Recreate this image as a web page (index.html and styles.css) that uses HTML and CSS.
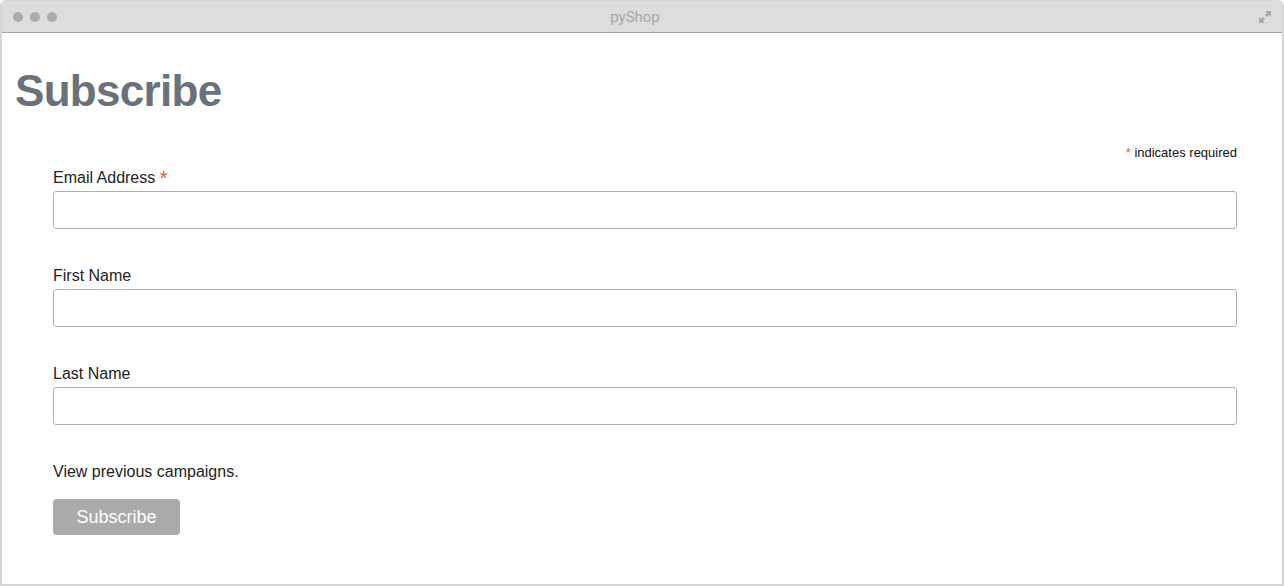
FILE: index.html
```html
<!DOCTYPE html>
<html>
<head>
<meta charset="utf-8">
<link rel="stylesheet" href="styles.css">
</head>
<body>
<div class="window">
  <div class="titlebar">
    <div class="dots"><span class="dot"></span><span class="dot"></span><span class="dot"></span></div>
    <div class="title">pyShop</div>
    <svg class="expand" width="14" height="14" viewBox="0 0 14 14">
      <path d="M7 1 H13 V7 L11 5 L9 7 L7 5 L9 3 Z" fill="#a9a9a9"/>
      <path d="M1 7 L3 9 L5 7 L7 9 L5 11 L7 13 H1 Z" fill="#a9a9a9"/>
    </svg>
  </div>
  <div class="content">
    <h1 class="heading">Subscribe</h1>
    <form class="form">
      <div class="required-note"><span class="ast">*</span> indicates required</div>
      <div class="field">
        <label class="label">Email Address <span class="ast ast-lg">*</span></label>
        <input class="input" type="email">
      </div>
      <div class="field">
        <label class="label">First Name</label>
        <input class="input" type="text">
      </div>
      <div class="field">
        <label class="label">Last Name</label>
        <input class="input" type="text">
      </div>
      <div class="campaigns">View previous campaigns.</div>
      <button class="btn" type="button">Subscribe</button>
    </form>
  </div>
</div>
</body>
</html>
```

FILE: styles.css
```css
* { box-sizing: border-box; }
html, body { margin: 0; padding: 0; background: #fff; }
body { font-family: "Liberation Sans", Arial, sans-serif; }

.window {
  width: 1284px;
  height: 586px;
  border: 2px solid #d6d6d6;
  border-top-width: 1px;
  border-radius: 6px 6px 0 0;
  display: flex;
  flex-direction: column;
  overflow: hidden;
}

.titlebar {
  height: 32px;
  flex: none;
  background: #dddddd;
  border-bottom: 1px solid #a3a3a3;
  display: flex;
  align-items: center;
  position: relative;
  padding: 0 10px 0 11px;
}

.dots { display: flex; gap: 7px; }
.dot { width: 10px; height: 10px; border-radius: 50%; background: #ababab; display: block; }

.title {
  position: absolute;
  left: 0; right: 14px; top: 0;
  text-align: center;
  line-height: 32px;
  font-family: Roboto, "Liberation Sans", sans-serif;
  font-size: 15px;
  color: #a8a8a8;
}

.expand { margin-left: auto; margin-top: 1px; }

.content { flex: 1; padding: 0 45px 0 0; }

.heading {
  margin: 0;
  padding: 32px 0 0 13px;
  font-family: "Liberation Sans", Arial, sans-serif;
  font-weight: 700;
  font-size: 44px;
  line-height: 52px;
  color: #69727b;
  letter-spacing: -0.7px;
}

.form { padding-left: 51px; }

.required-note {
  text-align: right;
  font-size: 13px;
  line-height: 15px;
  color: #111;
  margin-top: 28px;
  margin-bottom: 8px;
}

.ast { color: #e85c41; }
.ast-lg { font-size: 20px; line-height: 16px; vertical-align: -2px; }

.field { display: flex; flex-direction: column; gap: 4px; margin-bottom: 37px; }

.label { font-size: 16px; line-height: 19px; color: #222; }

.input {
  height: 38px;
  width: 100%;
  border: 1px solid #abb0b2;
  border-radius: 3px;
  background: #fff;
  margin: 0;
  padding: 0 10px;
  font: inherit;
}

.campaigns { font-size: 16px; line-height: 19px; color: #222; margin-bottom: 18px; }

.btn {
  width: 127px;
  height: 36px;
  border: 0;
  border-radius: 4px;
  background: #aaaaaa;
  color: #fff;
  font-family: "Liberation Sans", Arial, sans-serif;
  font-size: 18px;
  padding: 0;
}
```
